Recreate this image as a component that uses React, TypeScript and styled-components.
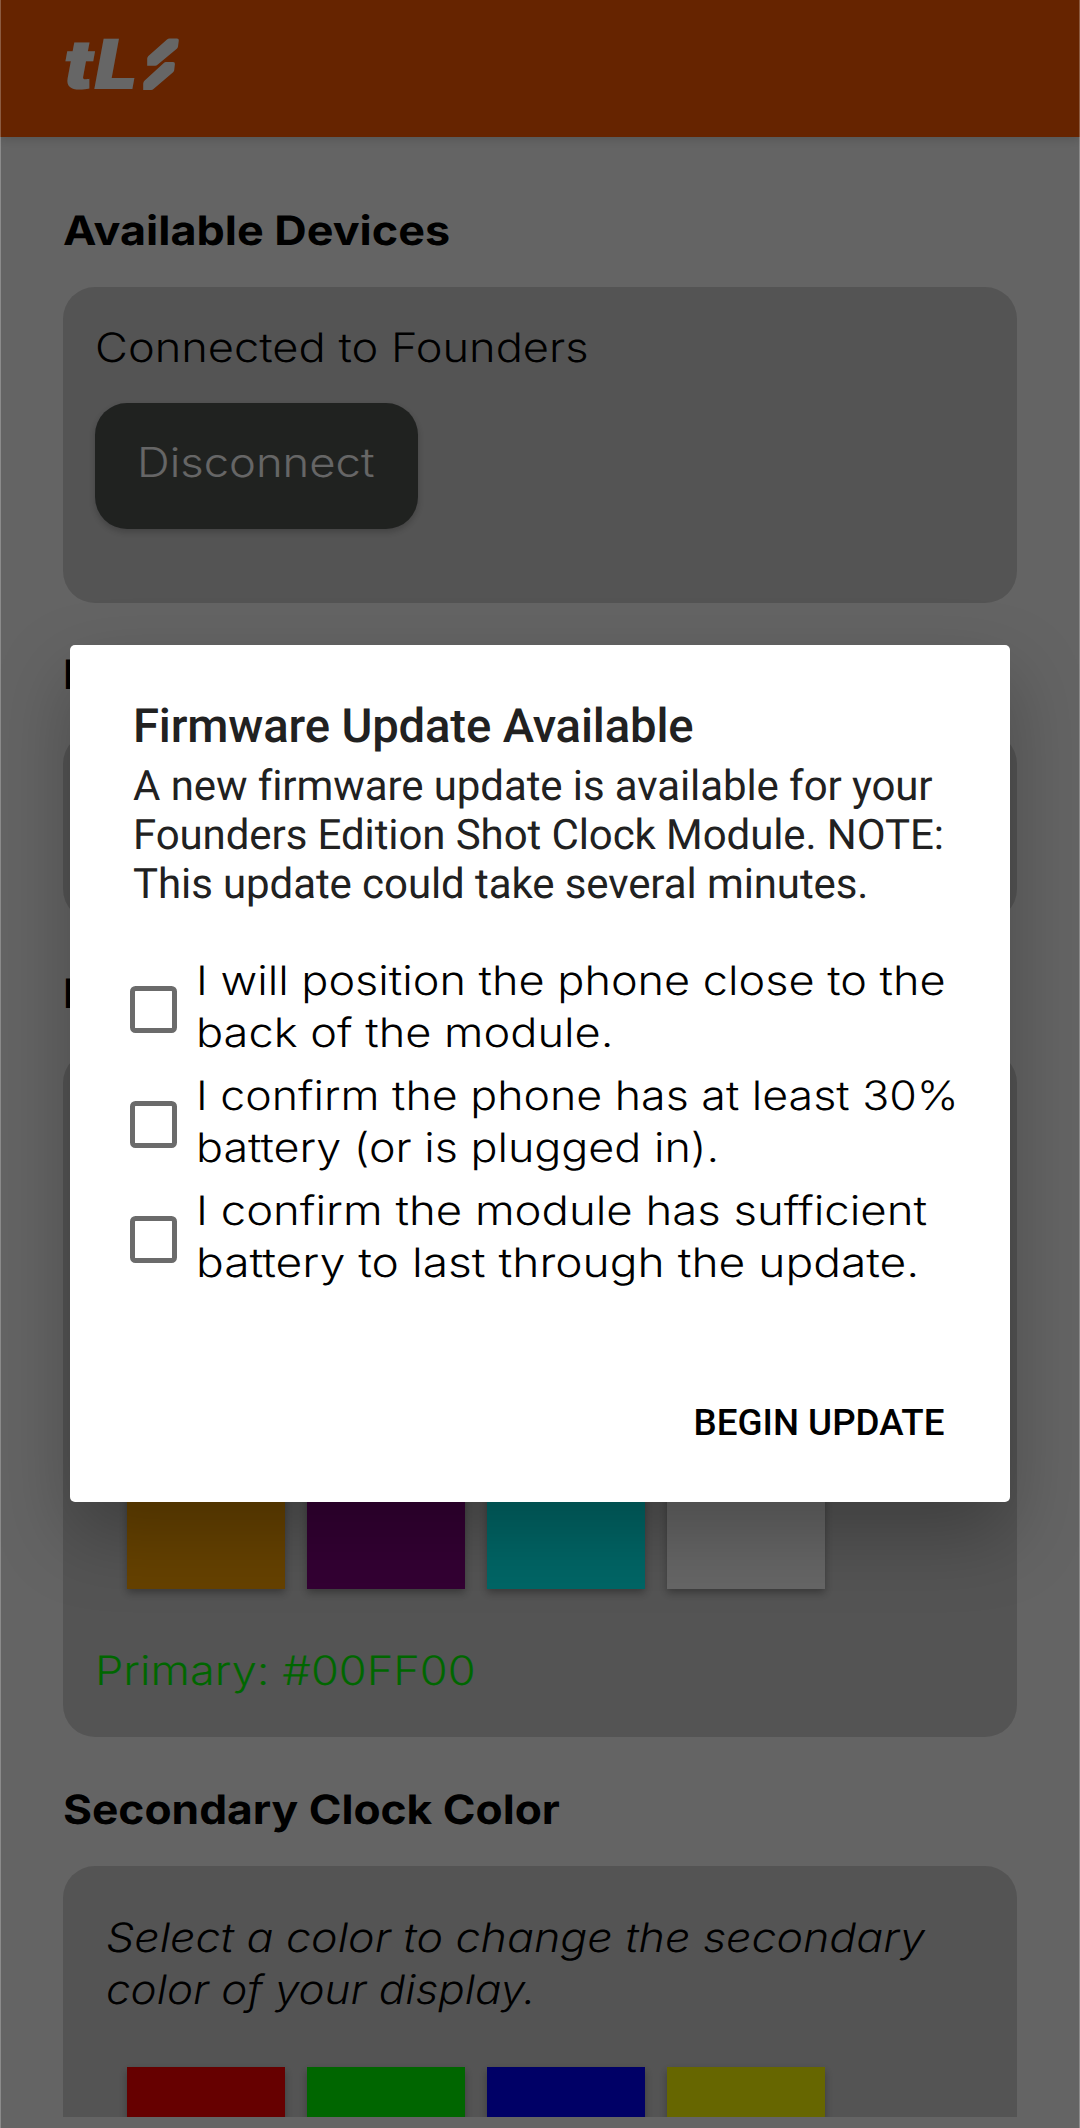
import React, { useState } from 'react';
import styled, { createGlobalStyle } from 'styled-components';

const GlobalStyle = createGlobalStyle`
  * { box-sizing: border-box; }
  body { margin: 0; background: #fafafa; overflow: hidden; }
`;

const brandFont = `Inter, "Open Sans", "Liberation Sans", sans-serif`;
const systemFont = `Roboto, "Liberation Sans", sans-serif`;

const Screen = styled.div`
  position: relative;
  width: 1080px;
  height: 2128px;
  overflow: hidden;
  background: #fafafa;
  font-family: ${brandFont};
  font-size: 40.5px;
  font-weight: 300;
  line-height: 52px;
  color: #000;
  text-rendering: geometricPrecision;
`;

const Page = styled.div`
  display: flex;
  flex-direction: column;
  height: 2116.6px;
  overflow: hidden;
`;

const Header = styled.header`
  display: flex;
  flex: none;
  align-items: flex-start;
  height: 137px;
  padding: 29px 0 0 63px;
  background: #ff5a00;
  box-shadow: 0 2px 10px rgba(0, 0, 0, 0.16);
`;

const LogoText = styled.span`
  width: 79px;
  font: italic 900 69px/70px ${brandFont};
  color: #fff;
  transform: scaleX(1.12);
  transform-origin: left;
`;

const LogoBolt = styled.svg`
  width: 38px;
  height: 56px;
  margin-top: 7px;
`;

const Content = styled.main`
  display: flex;
  flex-direction: column;
  gap: 46.8px;
  padding: 67.6px 63px 0;
`;

const Section = styled.section`
  display: flex;
  flex-direction: column;
  gap: 30.4px;
`;

const Heading = styled.h2`
  margin: 0;
  font-size: 40.5px;
  font-weight: 700;
  white-space: nowrap;
`;

const Card = styled.div<{ $height: number; $top?: number }>`
  display: flex;
  flex-direction: column;
  align-items: flex-start;
  height: ${p => p.$height}px;
  padding: ${p => p.$top ?? 35.3}px 32px 0;
  border-radius: 32px;
  background: #d2d2d2;
`;

const Line = styled.span<{ $stretch: number }>`
  display: block;
  width: max-content;
  white-space: nowrap;
  transform: scaleX(${p => p.$stretch});
  transform-origin: left;
`;

const DisconnectButton = styled.button`
  display: flex;
  align-items: flex-start;
  width: 322.6px;
  height: 126px;
  margin-top: 28.7px;
  padding: 34.3px 0 0 42px;
  border: 0;
  border-radius: 32px;
  background: #505552;
  box-shadow: 0 3px 7px rgba(0, 0, 0, 0.22);
  color: #fff;
  font: inherit;
`;

const Hint = styled.p`
  margin: 0 0 0 11px;
  font-style: italic;
`;

const Swatches = styled.div`
  display: grid;
  grid-template-columns: repeat(4, 158px);
  grid-auto-rows: 158px;
  gap: 22px;
  margin: 50.7px 0 0 32px;
`;

const Swatch = styled.button<{ $color: string }>`
  border: 0;
  background: ${p => p.$color};
  box-shadow: 0 4px 8px rgba(0, 0, 0, 0.3);
`;

const Selected = styled.div`
  margin: 56.2px 0 0 0;
  color: #00ff00;
`;

const Scrim = styled.div`
  position: absolute;
  inset: 0;
  display: flex;
  align-items: center;
  justify-content: center;
  padding-top: 19.3px;
  border: solid rgba(255, 255, 255, 0.25);
  border-width: 0 1px;
  background: rgba(0, 0, 0, 0.6);
`;

const Dialog = styled.div`
  display: flex;
  flex-direction: column;
  width: 940px;
  height: 857.4px;
  padding: 53.1px 0 57.2px;
  border-radius: 5px;
  background: #fff;
  box-shadow: 0 32px 76px rgba(0, 0, 0, 0.26);
`;

const Title = styled.h1`
  margin: 0 63px;
  font: 500 47.25px/56px ${systemFont};
  letter-spacing: -0.156px;
  color: #212121;
`;

const Message = styled.p`
  margin: 8px 0 0 63px;
  font: 400 42px/49px ${systemFont};
  letter-spacing: -0.09px;
  color: #212121;
  white-space: pre-line;
`;

const Checks = styled.div`
  display: flex;
  flex-direction: column;
  gap: 11px;
  margin: 45.9px 0 0 60.4px;
`;

const CheckRow = styled.label`
  display: flex;
  align-items: center;
  gap: 19px;
`;

const CheckBox = styled.input`
  appearance: none;
  flex: none;
  width: 47px;
  height: 47px;
  margin: 5px 0 0;
  border: 5.25px solid #6b6b6b;
  border-radius: 5.5px;

  &:checked { background: #6b6b6b; }
`;

const Actions = styled.div`
  display: flex;
  justify-content: flex-end;
  margin-top: auto;
  padding-right: 65.5px;
`;

const ActionButton = styled.button`
  padding: 0;
  border: 0;
  background: none;
  color: #000;
  font: 500 36.75px/44px ${systemFont};
`;

type TextLine = [text: string, stretch: number];

const Lines = ({ lines }: { lines: TextLine[] }) => (
  <>
    {lines.map(([text, stretch]) => (
      <Line key={text} $stretch={stretch}>{text}</Line>
    ))}
  </>
);

const palette = ['#ff0000', '#00ff00', '#0000ff', '#ffff00', '#ffa500', '#800080', '#00ffff', '#ffffff'];

const checks: TextLine[][] = [
  [['I will position the phone close to the', 1.1115], ['back of the module.', 1.1146]],
  [['I confirm the phone has at least 30%', 1.104], ['battery (or is plugged in).', 1.1073]],
  [['I confirm the module has sufficient', 1.1227], ['battery to last through the update.', 1.1385]],
];

const Palette = () => (
  <Swatches>
    {palette.map(color => <Swatch key={color} $color={color} />)}
  </Swatches>
);

export default function App() {
  const [done, setDone] = useState([false, false, false]);
  const toggle = (index: number) => setDone(done.map((v, i) => (i === index ? !v : v)));

  return (
    <Screen>
      <GlobalStyle />
      <Page>
        <Header>
          <LogoText>tL</LogoText>
          <LogoBolt viewBox="0 0 38 56" fill="#fff">
            <path d="M27.5 2.5h7.5q2 0 1.800 2l-.8 6q-.2 1.300-1.200 2.200L15.500 28.800q-1 .9-2.300.9H5.200V22.500q.1-1.500 1.200-2.600L25 3.500q1.200-1 2.500-1z" />
            <path d="M24 26h7q2.100 0 1.900 2l-.7 6.200q-.2 1.200-1.100 2.100L11.500 53q-1 1-2.300 1H1.200v-6.500q.2-1.800 1.500-3L21.800 27q1-1 2.200-1z" />
          </LogoBolt>
        </Header>
        <Content>
          <Section>
            <Heading><Line $stretch={1.1088}>Available Devices</Line></Heading>
            <Card $height={315.7}>
              <Line $stretch={1.1151}>Connected to Founders</Line>
              <DisconnectButton><Line $stretch={1.1202}>Disconnect</Line></DisconnectButton>
            </Card>
          </Section>
          <Section>
            <Heading><Line $stretch={1.1}>Display</Line></Heading>
            <Card $height={189.5} />
          </Section>
          <Section>
            <Heading><Line $stretch={1.1}>Primary Clock Color</Line></Heading>
            <Card $height={686.6} $top={45.9}>
              <Hint>
                <Lines lines={[['Select a color to change the primary', 1.105], ['color of your display.', 1.0858]]} />
              </Hint>
              <Palette />
              <Selected><Line $stretch={1.1151}>Primary: #00FF00</Line></Selected>
            </Card>
          </Section>
          <Section>
            <Heading><Line $stretch={1.0934}>Secondary Clock Color</Line></Heading>
            <Card $height={686.6} $top={45.9}>
              <Hint>
                <Lines lines={[['Select a color to change the secondary', 1.105], ['color of your display.', 1.0858]]} />
              </Hint>
              <Palette />
            </Card>
          </Section>
        </Content>
      </Page>
      <Scrim>
        <Dialog role="dialog">
          <Title>Firmware Update Available</Title>
          <Message>
            {'A new firmware update is available for your\nFounders Edition Shot Clock Module. NOTE:\nThis update could take several minutes.'}
          </Message>
          <Checks>
            {checks.map((lines, i) => (
              <CheckRow key={i}>
                <CheckBox type="checkbox" checked={done[i]} onChange={() => toggle(i)} />
                <span><Lines lines={lines} /></span>
              </CheckRow>
            ))}
          </Checks>
          <Actions>
            <ActionButton>BEGIN UPDATE</ActionButton>
          </Actions>
        </Dialog>
      </Scrim>
    </Screen>
  );
}
